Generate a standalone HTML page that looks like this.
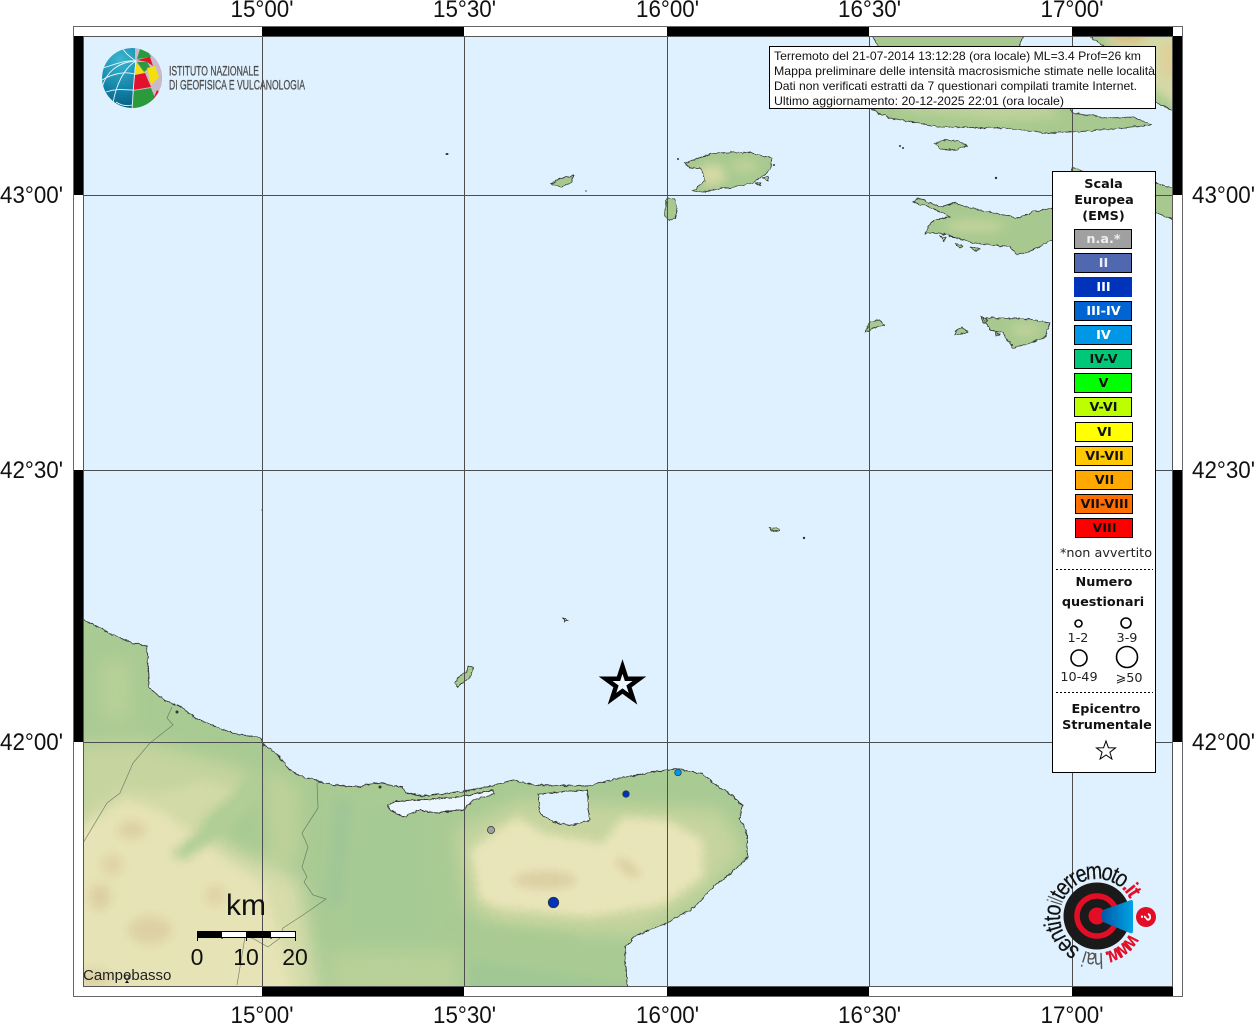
<!DOCTYPE html>
<html><head><meta charset="utf-8"><title>Mappa intensità macrosismiche</title>
<style>
html,body{margin:0;padding:0;background:#fff;width:1256px;height:1024px;overflow:hidden}
svg{display:block}
.t{font-family:"Liberation Sans",sans-serif;fill:#111}
.lab{font-family:"Liberation Sans",sans-serif;font-size:24px;fill:#111}
.b{font-family:"DejaVu Sans",sans-serif;font-weight:bold;font-size:12.8px;text-anchor:middle;fill:#111}
.r{font-family:"DejaVu Sans",sans-serif;font-size:12.8px;text-anchor:middle;fill:#222}
.box{stroke:#000;stroke-width:1}
.lg{font-family:"Liberation Sans",sans-serif;font-size:23px;text-anchor:middle;fill:#111}
</style></head><body>
<svg xmlns="http://www.w3.org/2000/svg" width="1256" height="1024" viewBox="0 0 1256 1024">
<defs>
<filter id="bl" filterUnits="userSpaceOnUse" x="40" y="0" width="1200" height="1024"><feGaussianBlur stdDeviation="9"/></filter>
<filter id="bs" filterUnits="userSpaceOnUse" x="40" y="0" width="1200" height="1024"><feGaussianBlur stdDeviation="5"/></filter>
<filter id="rough" filterUnits="userSpaceOnUse" x="60" y="20" width="1136" height="990">
<feTurbulence type="fractalNoise" baseFrequency=".22" numOctaves="2" seed="4" result="n"/>
<feDisplacementMap in="SourceGraphic" in2="n" scale="3.5" xChannelSelector="R" yChannelSelector="G"/>
</filter>
<clipPath id="mapc"><rect x="83" y="36" width="1090" height="951"/></clipPath>
<path id="landp" d="M70 612 L83 619 103 630 118 637 133 643 147 646 148 660 149 677 148 687 157 695 170 703 182 707 193 717 213 726 237 734 261 738 262 744 275 752 290 770 303 777 333 785 357 787 378 783 402 787 407 793 420 796 453 793 487 787 513 780 533 785 587 786 620 778 665 770 678 769 703 774 713 783 728 792 742 805 740 820 747 833 747 857 735 870 713 887 695 907 667 923 637 935 625 947 627 983 630 1000 70 1000Z"/>
<path id="isl" d="M868 30 L880 48 872 110 890 118 940 127 1007 128 1047 133 1090 131 1152 125 1133 117 1107 118 1073 113 1040 60 1020 46 1024 30Z
M1080 30 L1110 50 1155 102 1180 114 1180 30Z
M1072 168 L1090 172 1100 190 1155 183 1180 190 1180 222 1157 213 1100 205 1072 190Z
M913 202 L919 198 940 207 953 203 980 210 1017 218 1033 212 1052 208 1075 210 1075 235 1052 240 1033 250 1017 255 1010 247 973 243 940 233 925 233 933 220 950 217 937 210Z
M865 333 L870 322 880 320 884 325 873 328Z
M983 318 L1007 318 1030 319 1050 323 1045 337 1030 343 1013 348 1003 333 990 330Z
M955 331 L962 327 968 332 955 335Z
M685 163 L713 153 747 152 772 158 770 170 753 183 727 188 700 192 693 191 705 180 700 168 690 168Z
M551 184 L560 178 573 176 572 182 562 187Z
M667 198 L674 199 677 208 676 219 668 221 665 215Z
M455 683 L460 675 466 673 468 667 474 667 470 677 458 687Z
M935 143 L945 140 958 141 967 146 955 150 940 149Z
M769 528 L778 529 779 531 771 531Z
M563 618 L568 620 565 622Z
M940 236 L946 238 944 241Z M955 243 L963 246 960 248Z M970 247 L980 249 975 251Z
M995 332 L1000 335 996 336Z M762 178 L768 176 768 181Z M756 183 L761 182 760 186Z
M981 316 L988 320 984 324Z"/>
<clipPath id="landc"><use href="#landp"/></clipPath>
<clipPath id="islc"><use href="#isl"/></clipPath>
<clipPath id="glob"><circle cx="132" cy="78" r="30"/></clipPath>
<radialGradient id="gb" cx=".3" cy=".2" r=".95"><stop offset="0" stop-color="#3bb6d0"/><stop offset=".55" stop-color="#127fa6"/><stop offset="1" stop-color="#00506f"/></radialGradient>
<linearGradient id="cone" x1="0" x2="1"><stop offset="0" stop-color="#0058a8"/><stop offset="1" stop-color="#00a4e4"/></linearGradient>
</defs>

<rect x="83" y="36" width="1090" height="951" fill="#dff1ff"/>

<g clip-path="url(#mapc)">
<g filter="url(#rough)">
<g clip-path="url(#landc)">
<rect x="60" y="600" width="720" height="410" fill="#a8ca93"/>
<g filter="url(#bl)">
<path d="M100 660 L130 660 130 720 100 720Z" fill="#b8d098"/>
<path d="M70 745 L140 740 250 770 240 800 180 830 150 880 70 880Z" fill="#c6d49f"/>
<path d="M70 830 L125 790 175 800 235 850 300 880 320 1000 70 1000Z" fill="#d7dcab"/>
<path d="M262 765 L300 785 300 860 270 870Z" fill="#bdd19a"/>
<path d="M360 810 L420 805 430 1000 350 1000Z" fill="#a6ca94"/>
<path d="M330 950 L460 950 460 1000 330 1000Z" fill="#b8d099"/>
<path d="M455 830 L520 800 720 810 745 850 700 900 640 935 500 930 465 905Z" fill="#c6d49e"/>
</g>
<g filter="url(#bs)">
<path d="M70 835 L125 800 170 815 225 860 265 885 295 1000 70 1000Z" fill="#e6e3b6"/>
<path d="M185 830 L235 790 200 780 150 800Z" fill="#d2daa8"/>
<path d="M255 775 L215 815 170 855 185 860 230 830 265 790Z" fill="#b0ce96"/>
<ellipse cx="132" cy="830" rx="14" ry="9" fill="#dccfa4"/>
<ellipse cx="112" cy="865" rx="11" ry="11" fill="#dfd3a8"/>
<ellipse cx="100" cy="897" rx="11" ry="13" fill="#dccfa2"/>
<ellipse cx="150" cy="930" rx="22" ry="14" fill="#ddd0a4"/>
<ellipse cx="95" cy="978" rx="18" ry="8" fill="#dccfa2"/>
<ellipse cx="215" cy="895" rx="10" ry="10" fill="#dfd2a6"/>
<path d="M335 800 L352 800 342 905 326 905Z" fill="#a0c697"/>
<path d="M470 850 L517 817 543 833 603 843 623 817 667 820 703 840 703 877 663 905 587 917 497 908 480 900Z" fill="#e9e5ba"/>
<ellipse cx="545" cy="880" rx="32" ry="9" fill="#dccea3"/>
<ellipse cx="628" cy="868" rx="15" ry="5" transform="rotate(38 628 868)" fill="#d8c99c"/>
<path d="M490 925 L570 935 620 983 560 1000 480 1000 470 940Z" fill="#a9cb93"/>
<path d="M470 960 L630 985 630 1000 470 1000Z" fill="#a0c794"/>
</g>
</g>
<use href="#landp" fill="none" stroke="#333" stroke-width=".9"/>
<path d="M388 805 L397 801 453 798 470 795 493 790 494 794 473 800 463 810 437 813 420 810 403 817 390 810Z" fill="#ecf6ff" stroke="#333" stroke-width=".9"/>
<path d="M538 794 L587 790 588 810 590 820 580 823 570 825 553 822 540 813Z" fill="#dff1ff" stroke="#333" stroke-width=".9"/>
<g clip-path="url(#islc)">
<rect x="450" y="20" width="740" height="680" fill="#a7c98f"/>
<g filter="url(#bs)">
<path d="M900 60 H1020 L1060 118 1000 122 900 110Z" fill="#bcd29a"/>
<path d="M1100 30 H1180 V110 L1130 70Z" fill="#d5d9a6"/>
<ellipse cx="1128" cy="36" rx="18" ry="8" fill="#d9bf82"/>
<ellipse cx="1172" cy="60" rx="10" ry="20" fill="#e0cf96"/>
<ellipse cx="975" cy="226" rx="30" ry="6" fill="#c4d49c"/>
<ellipse cx="712" cy="175" rx="14" ry="11" fill="#d6d9a5"/>
<ellipse cx="745" cy="166" rx="14" ry="8" fill="#bcd197"/>
<ellipse cx="1025" cy="330" rx="14" ry="7" fill="#bfd29a"/>
</g>
</g>
<use href="#isl" fill="none" stroke="#333" stroke-width=".8"/>
</g>
<g fill="none" stroke="#5a6b58" stroke-width=".7" opacity=".8">
<path d="M172 707 L167 718 173 725 150 743 133 763 120 793 107 803 83 843"/>
<path d="M317 783 L318 808 302 833 308 847 302 867 307 877 304 882 313 895 326 899 303 915 283 928 280 938 268 947 252 938 245 937 237 985"/>
</g>
<g fill="#333">
<ellipse cx="447" cy="154" rx="1.500" ry="1"/><circle cx="678" cy="159" r="1"/><circle cx="774" cy="165" r="1"/><circle cx="996" cy="178" r="1.200"/><circle cx="900" cy="146" r="1"/><circle cx="903" cy="148" r="1"/><circle cx="1012" cy="345" r="1"/><circle cx="586" cy="191" r=".7"/><circle cx="262" cy="510" r=".6"/><circle cx="177" cy="712" r="1.500"/><circle cx="380" cy="787" r="1.500"/><circle cx="804" cy="538" r="1.200"/>
</g>
</g>

<!-- grid -->
<path d="M262.500 36V987M464.500 36V987M667.500 36V987M869.500 36V987M1072.500 36V987M83 195.500H1173M83 470.500H1173M83 742.500H1173" stroke="#4d4d4d" stroke-width="1" fill="none"/>

<!-- frame -->
<rect x="73.500" y="26.500" width="1109" height="970" fill="none" stroke="#666" stroke-width="1"/>
<rect x="83.500" y="36.500" width="1089" height="950" fill="none" stroke="#555" stroke-width="1"/>
<g fill="#000">
<rect x="262" y="27" width="202" height="9"/><rect x="667" y="27" width="202" height="9"/><rect x="1072" y="27" width="101" height="9"/>
<rect x="262" y="987" width="202" height="9"/><rect x="667" y="987" width="202" height="9"/><rect x="1072" y="987" width="101" height="9"/>
<rect x="74" y="36" width="9" height="159"/><rect x="74" y="470" width="9" height="272"/>
<rect x="1173" y="36" width="9" height="159"/><rect x="1173" y="470" width="9" height="272"/>
</g>

<!-- frame labels -->
<g class="lab">
<text x="230.500" y="17" textLength="63" lengthAdjust="spacingAndGlyphs">15°00'</text><text x="433" y="17" textLength="63" lengthAdjust="spacingAndGlyphs">15°30'</text><text x="636" y="17" textLength="63" lengthAdjust="spacingAndGlyphs">16°00'</text><text x="838" y="17" textLength="63" lengthAdjust="spacingAndGlyphs">16°30'</text><text x="1040.500" y="17" textLength="63" lengthAdjust="spacingAndGlyphs">17°00'</text>
<text x="230.500" y="1023" textLength="63" lengthAdjust="spacingAndGlyphs">15°00'</text><text x="433" y="1023" textLength="63" lengthAdjust="spacingAndGlyphs">15°30'</text><text x="636" y="1023" textLength="63" lengthAdjust="spacingAndGlyphs">16°00'</text><text x="838" y="1023" textLength="63" lengthAdjust="spacingAndGlyphs">16°30'</text><text x="1040.500" y="1023" textLength="63" lengthAdjust="spacingAndGlyphs">17°00'</text>
<text x="0" y="203" textLength="63" lengthAdjust="spacingAndGlyphs">43°00'</text><text x="0" y="478" textLength="63" lengthAdjust="spacingAndGlyphs">42°30'</text><text x="0" y="750" textLength="63" lengthAdjust="spacingAndGlyphs">42°00'</text>
<text x="1192" y="203" textLength="63" lengthAdjust="spacingAndGlyphs">43°00'</text><text x="1192" y="478" textLength="63" lengthAdjust="spacingAndGlyphs">42°30'</text><text x="1192" y="750" textLength="63" lengthAdjust="spacingAndGlyphs">42°00'</text>
</g>

<!-- INGV logo -->
<g clip-path="url(#glob)">
<circle cx="132" cy="78" r="30" fill="url(#gb)"/>
<path d="M135 46 L165 46 165 110 132 110 133 89 135 75 135 61Z" fill="#c9b9c9"/>
<path d="M137 59 L140 49 149 53 151 57Z" fill="#2a9a3c"/>
<path d="M137 60 L150 57 153 66 147 62Z" fill="#e2122c"/>
<path d="M137 62 L147 62 150 67 144 72Z" fill="#2a9a3c"/>
<path d="M135 62 L145 73 135 75Z" fill="#f3df10"/>
<path d="M147 68 L155 66 159 77 151 85Z" fill="#f3df10"/>
<path d="M135 75 L145 73 151 87 133 90Z" fill="#e2122c"/>
<path d="M133 91 L151 88 155 98 143 110 132 110Z" fill="#2a9a3c"/>
<path d="M155 97 L159 92 157 90 152 102Z" fill="#e2122c"/>
<g fill="none" stroke="#eaf6fa" stroke-width=".9">
<path d="M136 61 C134 75 133 95 132 110"/>
<path d="M136 61 C124 68 116 85 113 103"/>
<path d="M136 61 C118 62 106 72 102 88"/>
<path d="M136 61 C128 56 125 52 122 48"/>
<path d="M103 68 C118 63 126 60 136 61"/>
<path d="M102 80 C112 74 124 71 134 74"/>
<path d="M106 92 C118 88 126 90 133 90"/>
<path d="M116 102 C122 106 128 106 132 105"/>
</g>
</g>
<g font-family="Liberation Sans,sans-serif" font-size="13.500" fill="#4a4a4a" stroke="#4a4a4a" stroke-width=".25">
<text x="169" y="75.500" textLength="90" lengthAdjust="spacingAndGlyphs">ISTITUTO NAZIONALE</text>
<text x="169" y="89.500" textLength="136" lengthAdjust="spacingAndGlyphs">DI GEOFISICA E VULCANOLOGIA</text>
</g>

<!-- info box -->
<rect x="769.500" y="46.500" width="386" height="62" fill="#fff" stroke="#000"/>
<g class="t" font-size="12">
<text x="774" y="60" textLength="367" lengthAdjust="spacingAndGlyphs">Terremoto del 21-07-2014 13:12:28 (ora locale) ML=3.4 Prof=26 km</text>
<text x="774" y="75" textLength="381" lengthAdjust="spacingAndGlyphs">Mappa preliminare delle intensità macrosismiche stimate nelle località</text>
<text x="774" y="90" textLength="363" lengthAdjust="spacingAndGlyphs">Dati non verificati estratti da 7 questionari compilati tramite Internet.</text>
<text x="774" y="105" textLength="290" lengthAdjust="spacingAndGlyphs">Ultimo aggiornamento: 20-12-2025 22:01 (ora locale)</text>
</g>

<!-- legend -->
<rect x="1052.500" y="171.500" width="103" height="601" fill="#fff" stroke="#000"/>
<text class="b" x="1103.500" y="188">Scala</text><text class="b" x="1104" y="204">Europea</text><text class="b" x="1103.500" y="220">(EMS)</text>
<g class="box">
<rect x="1074.500" y="229.500" width="57" height="19" fill="#a0a0a0"/>
<rect x="1074.500" y="253.500" width="57" height="19" fill="#5068b0"/>
<rect x="1074.500" y="277.500" width="57" height="19" fill="#0033bb" stroke="#0033bb"/>
<rect x="1074.500" y="301.500" width="57" height="19" fill="#0064d2"/>
<rect x="1074.500" y="325.500" width="57" height="19" fill="#0098e6"/>
<rect x="1074.500" y="349.500" width="57" height="19" fill="#00c878"/>
<rect x="1074.500" y="373.500" width="57" height="19" fill="#00ff00"/>
<rect x="1074.500" y="397.500" width="57" height="19" fill="#bbff00"/>
<rect x="1075.500" y="422.500" width="57" height="19" fill="#ffff00"/>
<rect x="1075.500" y="446.500" width="57" height="19" fill="#ffc800"/>
<rect x="1075.500" y="470.500" width="57" height="19" fill="#ffa800"/>
<rect x="1075.500" y="494.500" width="57" height="19" fill="#ff6e00"/>
<rect x="1075.500" y="518.500" width="57" height="19" fill="#ff0000"/>
</g>
<g class="b">
<text x="1103.500" y="243" style="fill:#eee">n.a.*</text><text x="1103.500" y="267" style="fill:#e8ecff">II</text><text x="1103.500" y="291" style="fill:#fff">III</text><text x="1103.500" y="315" style="fill:#fff">III-IV</text><text x="1103.500" y="339" style="fill:#fff">IV</text>
<text x="1103.500" y="363">IV-V</text><text x="1103.500" y="387">V</text><text x="1103.500" y="411">V-VI</text><text x="1104.500" y="436">VI</text><text x="1104.500" y="460">VI-VII</text><text x="1104.500" y="484">VII</text><text x="1104.500" y="508">VII-VIII</text><text x="1104.500" y="532">VIII</text>
</g>
<text class="r" x="1106" y="557">*non avvertito</text>
<path d="M1056 569.500H1153M1056 692.500H1153" stroke="#000" stroke-dasharray="2 2" fill="none"/>
<text class="b" x="1104" y="586">Numero</text><text class="b" x="1103" y="606">questionari</text>
<g fill="#fff" stroke="#000" stroke-width="1.600">
<circle cx="1078.500" cy="623.500" r="3.500"/><circle cx="1126" cy="623" r="5"/><circle cx="1079" cy="658" r="8"/><circle cx="1127" cy="657" r="10.500"/>
</g>
<text class="r" x="1078" y="642">1-2</text><text class="r" x="1127" y="642">3-9</text><text class="r" x="1079" y="681">10-49</text><text class="r" x="1129" y="682">⩾50</text>
<text class="b" x="1106" y="713">Epicentro</text><text class="b" x="1107" y="729">Strumentale</text>
<polygon points="1106,741 1108.400,747.700 1115.500,747.900 1109.900,752.200 1111.900,759 1106,755 1100.100,759 1102.100,752.200 1096.500,747.900 1103.600,747.700" fill="#fff" stroke="#000" stroke-width="1"/>

<!-- epicentre star -->
<polygon points="622.500,666.500 626.500,678.800 639.400,678.800 629,686.400 633,698.700 622.500,691.100 612,698.700 616,686.400 605.600,678.800 618.500,678.800" fill="#eef7ff" stroke="#000" stroke-width="4.500" stroke-miterlimit="10"/>

<!-- points -->
<g stroke="#333" stroke-width=".7">
<circle cx="491" cy="830" r="3.600" fill="#a0a0a0"/>
<circle cx="626" cy="794" r="3.300" fill="#0033bb"/>
<circle cx="678" cy="772.500" r="3.300" fill="#0098e6"/>
<circle cx="553.500" cy="902.500" r="5.300" fill="#0033bb"/>
</g>

<!-- scale -->
<text x="226" y="915" font-family="Liberation Sans,sans-serif" font-size="30" fill="#111">km</text>
<rect x="197.500" y="931.500" width="98" height="6" fill="#fff" stroke="#000"/>
<rect x="197" y="931" width="25" height="7" fill="#000"/><rect x="246" y="931" width="25" height="7" fill="#000"/>
<path d="M197.500 931V941M295.500 931V941M246.500 931V941M222 937V939M271 937V939" stroke="#000" fill="none"/>
<text class="lg" x="197" y="965">0</text><text class="lg" x="246" y="965">10</text><text class="lg" x="295" y="965">20</text>
<text x="83" y="980" font-family="Liberation Sans,sans-serif" font-size="15" fill="#222">Campobasso</text>
<circle cx="127" cy="977" r="2" fill="none" stroke="#222"/><path d="M125 983H129L127 980Z" fill="#111"/>

<!-- hai sentito logo -->
<circle cx="1097" cy="916" r="33.500" fill="#1a1a1a"/>
<circle cx="1097" cy="916" r="20" fill="none" stroke="#e30d25" stroke-width="5.500"/>
<circle cx="1097" cy="916" r="8.500" fill="#e30d25"/>
<path d="M1103 910 L1131 900 Q1133 900 1133 902 V931 Q1133 934 1130 933 L1103 922 Q1100 916 1103 910Z" fill="url(#cone)"/>
<circle cx="1146" cy="917" r="10" fill="#e30d25"/>
<text transform="translate(1146 917) rotate(90)" y="5" text-anchor="middle" font-family="Liberation Sans,sans-serif" font-weight="bold" font-size="15" fill="#fff">?</text>
<g font-family="Liberation Sans,sans-serif" font-size="24" text-anchor="middle" fill="#111" stroke="#111" stroke-width=".2">
<g transform="translate(1097 916)">
<text transform="rotate(298) translate(0 -37) scale(.82 1)">t</text>
<text transform="rotate(309) translate(0 -37) scale(.82 1)">e</text>
<text transform="rotate(320) translate(0 -37) scale(.82 1)">r</text>
<text transform="rotate(328) translate(0 -37) scale(.82 1)">r</text>
<text transform="rotate(339) translate(0 -37) scale(.82 1)">e</text>
<text transform="rotate(356) translate(0 -37) scale(.82 1)">m</text>
<text transform="rotate(13.500) translate(0 -37) scale(.82 1)">o</text>
<text transform="rotate(24) translate(0 -37) scale(.82 1)">t</text>
<text transform="rotate(34) translate(0 -37) scale(.82 1)">o</text>
<g fill="#e30d25" stroke="#e30d25" font-weight="bold" font-size="22">
<text transform="rotate(45) translate(0 -37) scale(.85 1)">.</text>
<text transform="rotate(51) translate(0 -37) scale(.85 1)">i</text>
<text transform="rotate(58) translate(0 -37) scale(.85 1)">t</text>
</g>
<text transform="rotate(214.500) translate(0 -37) scale(.82 1)">s</text>
<text transform="rotate(228) translate(0 -37) scale(.82 1)">e</text>
<text transform="rotate(243) translate(0 -37) scale(.82 1)">n</text>
<text transform="rotate(254) translate(0 -37) scale(.82 1)">t</text>
<text transform="rotate(260) translate(0 -37) scale(.82 1)">i</text>
<text transform="rotate(267) translate(0 -37) scale(.82 1)">t</text>
<text transform="rotate(278) translate(0 -37) scale(.82 1)">o</text>
<g fill="#555" stroke="none" font-size="22">
<text transform="rotate(288) translate(0 -37) scale(.6 1)">i</text>
<text transform="rotate(292) translate(0 -37) scale(.6 1)">l</text>
<text transform="rotate(178) translate(0 -37) scale(.75 1)">h</text>
<text transform="rotate(188) translate(0 -37) scale(.75 1)">a</text>
<text transform="rotate(197) translate(0 -37) scale(.75 1)">i</text>
</g>
<g fill="#e30d25" stroke="#e30d25" font-weight="bold" font-size="21">
<text transform="rotate(128) translate(0 -37) scale(.8 1)">w</text>
<text transform="rotate(142) translate(0 -37) scale(.8 1)">w</text>
<text transform="rotate(156) translate(0 -37) scale(.8 1)">w</text>
<text transform="rotate(165) translate(0 -37) scale(.8 1)">.</text>
</g>
</g>
</g>
</svg>
</body></html>
